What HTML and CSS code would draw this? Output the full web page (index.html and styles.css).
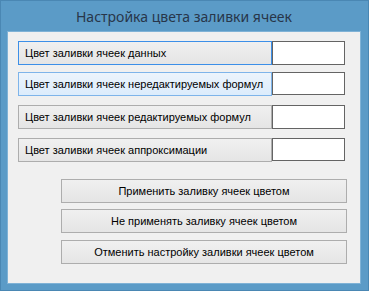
FILE: index.html
```html
<!DOCTYPE html>
<html lang="ru">
<head>
<meta charset="utf-8">
<link rel="stylesheet" href="styles.css">
</head>
<body>
<div class="window">
  <div class="titlebar">Настройка цвета заливки ячеек</div>
  <div class="panel">
    <div class="rows">
      <div class="row r1">
        <div class="label focused">Цвет заливки ячеек данных</div>
        <div class="swatch"></div>
      </div>
      <div class="row r2">
        <div class="label hover">Цвет заливки ячеек нередактируемых формул</div>
        <div class="swatch"></div>
      </div>
      <div class="row r3">
        <div class="label">Цвет заливки ячеек редактируемых формул</div>
        <div class="swatch"></div>
      </div>
      <div class="row r4">
        <div class="label">Цвет заливки ячеек аппроксимации</div>
        <div class="swatch"></div>
      </div>
    </div>
    <div class="actions">
      <div class="btn b1">Применить заливку ячеек цветом</div>
      <div class="btn b2">Не применять заливку ячеек цветом</div>
      <div class="btn b3">Отменить настройку заливки ячеек цветом</div>
    </div>
  </div>
</div>
</body>
</html>
```
FILE: styles.css
```css
html, body {
  margin: 0;
  padding: 0;
}
body {
  width: 369px;
  height: 291px;
  overflow: hidden;
  font-family: "Liberation Sans", Arial, sans-serif;
}
.window {
  box-sizing: border-box;
  width: 369px;
  height: 291px;
  background: #5b9bc7;
  border: 1px solid #4a87b3;
  display: flex;
  flex-direction: column;
  padding: 0 7px 0 6px;
}
.titlebar {
  height: 29px;
  flex: none;
  display: flex;
  align-items: center;
  justify-content: center;
  font-family: "Noto Sans", sans-serif;
  font-size: 14px;
  color: #28364a;
  padding-top: 1px;
}
.panel {
  box-sizing: border-box;
  height: 253px;
  background: #f0f0f0;
  border: 1px solid #7fb2d6;
  padding: 9px 0 0 10px;
  display: flex;
  flex-direction: column;
}
.rows {
  display: flex;
  flex-direction: column;
}
.row {
  display: flex;
  height: 24px;
}
.r2 { margin-top: 7px; }
.r3, .r4 { margin-top: 9px; }
.label {
  box-sizing: border-box;
  width: 254px;
  height: 24px;
  border: 1px solid #adadad;
  background: linear-gradient(#f0f0f0, #e5e5e5);
  font-size: 11px;
  color: #000;
  display: flex;
  align-items: center;
  padding-left: 6px;
  white-space: nowrap;
}
.label.focused {
  border-color: #3c8fe8;
}
.label.hover {
  border-color: #7eb4ea;
  background: linear-gradient(#ecf4fc, #dcecfc);
}
.swatch {
  box-sizing: border-box;
  width: 73px;
  height: 24px;
  background: #fff;
  border: 1px solid #646464;
}
.r2 .swatch, .r4 .swatch { height: 23px; }
.actions {
  display: flex;
  flex-direction: column;
  margin: 17px 0 0 43px;
}
.btn {
  box-sizing: border-box;
  width: 286px;
  height: 24px;
  border: 1px solid #adadad;
  background: linear-gradient(#f0f0f0, #e5e5e5);
  font-size: 11px;
  color: #000;
  display: flex;
  align-items: center;
  justify-content: center;
}
.b2 { margin-top: 6px; }
.b3 { margin-top: 7px; }
```
